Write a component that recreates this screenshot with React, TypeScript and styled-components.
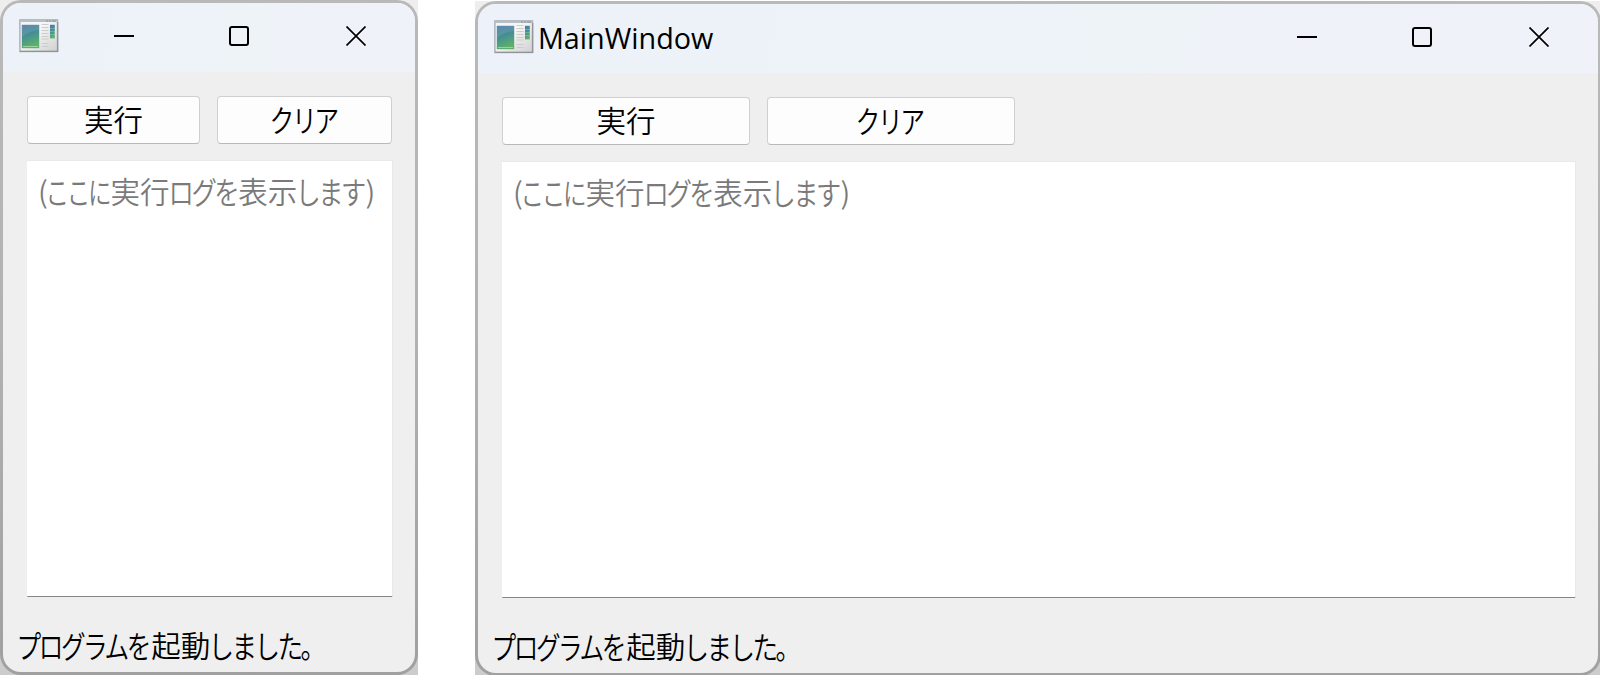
import React from "react";
import styled, { createGlobalStyle } from "styled-components";

const GlobalStyle = createGlobalStyle`
  * { box-sizing: border-box; }
  body {
    margin: 0;
    background: #fff;
    overflow: hidden;
  }
`;

const Desktop = styled.main`
  display: flex;
  gap: 57px;
  width: 1601px;
  height: 675px;
  overflow: hidden;
  font-family: "Noto Sans CJK JP", sans-serif;
  font-weight: 350;
  font-size: 29.5px;
  color: #000;
`;

const Backdrop = styled.div<{ $width: number; $top: number }>`
  flex: none;
  width: ${(p) => p.$width}px;
  height: 675px;
  margin-top: ${(p) => p.$top}px;
  background: linear-gradient(#eeeeee, #e6e6e6 50%, #cccccc);
`;

const Frame = styled.section`
  height: 100%;
  padding: 3px;
  border-radius: 21px;
  background: linear-gradient(#b9b9b9, #b2b2b2 50%, #a0a0a0);
`;

const Body = styled.div`
  display: flex;
  flex-direction: column;
  height: 100%;
  border-radius: 18px;
  overflow: hidden;
  background: #efefef;
`;

const TitleBar = styled.header`
  display: flex;
  flex: none;
  height: 69px;
  padding-left: 16px;
  background: linear-gradient(100deg, #edf2fa, #eef3f8 60%, #eff2f8);
`;

const AppIcon = styled.svg`
  flex: none;
  width: 40px;
  height: 34px;
  margin-top: 16px;
`;

const Title = styled.h1`
  margin: 0 0 0 4px;
  font: 400 29.5px/67px "Open Sans", "Noto Sans", sans-serif;
  white-space: nowrap;
`;

const TitleText = styled.span`
  display: inline-block;
  transform: scaleX(0.975);
  transform-origin: left;
`;

const Captions = styled.div`
  display: flex;
  margin-left: auto;
`;

const CaptionButton = styled.button<{ $width: number }>`
  display: flex;
  justify-content: center;
  width: ${(p) => p.$width}px;
  padding: 23px 0 0;
  border: 0;
  background: none;

  svg {
    width: 20px;
    height: 20px;
    fill: none;
    stroke: #000;
    stroke-width: 2;
  }
`;

const Content = styled.div`
  display: flex;
  flex: none;
  flex-direction: column;
  gap: 16px;
  padding: 24px 22px 0 24px;
`;

const ButtonRow = styled.div`
  display: flex;
  gap: 17px;
`;

const PushButton = styled.button<{ $width: number }>`
  width: ${(p) => p.$width}px;
  height: 48px;
  padding: 0 0 4px;
  border: 1px solid #d0d0d0;
  border-bottom-color: #b9b9b9;
  border-radius: 4px;
  background: #fdfdfd;
  color: #000;
  font: inherit;
  line-height: 42px;
  white-space: nowrap;
`;

const Log = styled.div`
  height: 437px;
  padding: 5px 0 0 11px;
  border: 1px solid #e9e9e9;
  border-width: 1px 1px 1px 0;
  border-bottom-color: #868686;
  border-radius: 1px;
  background: #fff;
  color: #7a7a7a;
  line-height: 48px;
  white-space: nowrap;
`;

const StatusBar = styled.footer`
  padding: 23px 0 0 15px;
  line-height: 48px;
  white-space: nowrap;
`;

const EM = 29.5;
const TIGHT = 0.9;

/* Kana are set narrower than kanji: each glyph is condensed to the given pitch. */
const Kana = styled.span<{ $count: number; $pitch: number }>`
  display: inline-block;
  width: ${(p) => p.$count * EM * TIGHT}px;
  margin-right: ${(p) => p.$count * (p.$pitch - EM * TIGHT)}px;
  letter-spacing: ${EM * (TIGHT - 1)}px;
  text-align: left;
  transform: translateX(-1.5px) scale(${(p) => p.$pitch / (EM * TIGHT)}, 1.05);
  transform-origin: left;
`;

const Paren = styled.span`
  display: inline-block;
  width: 9px;
`;

function WindowIcon({ id }: { id: string }) {
  return (
    <AppIcon viewBox="0 0 40 34">
      <defs>
        <linearGradient id={id} x1="0" y1="0" x2="0.3" y2="1">
          <stop offset="0" stopColor="#4a78ab" />
          <stop offset="0.5" stopColor="#458f93" />
          <stop offset="1" stopColor="#5cb06b" />
        </linearGradient>
        <linearGradient id={`${id}-bg`} x1="0" y1="0" x2="1" y2="1">
          <stop offset="0.4" stopColor="#f6f6f6" />
          <stop offset="1" stopColor="#d0d0d0" />
        </linearGradient>
      </defs>
      <rect x="0.9" y="0.9" width="37.6" height="31.6" fill={`url(#${id}-bg)`} stroke="#a9adb2" strokeWidth="1.4" />
      <path d="M1 1H38.5V3H1Z" fill="#b9bfc6" />
      <path d="M1 32.3H38.7V3" fill="none" stroke="#909498" strokeWidth="1.2" />
      <path d="M27 2h2m1 0h2m1 0h4" stroke="#8d9399" />
      <rect x="2.8" y="5.8" width="17.4" height="23.4" fill={`url(#${id})`} />
      <path d="M3 18Q9 12 20 11V6H3Z" fill="#fff" opacity="0.1" />
      <path d="M4 27.5H19" stroke="#a9d9a8" strokeWidth="0.8" />
      <path d="M22.5 5.5h7m-7 3h7m-7 3h7m-7 3h7m-7 3h7m-7 2.5h7m-7 4.5h7m-7 3h7" stroke="#cccccc" strokeWidth="1.2" />
      <rect x="31" y="5.8" width="4.8" height="13.6" fill={`url(#${id})`} />
      <path d="M31 9.5h5m-5 3h5m-5 3h5" stroke="#a9cbd0" strokeWidth="0.7" opacity="0.6" />
    </AppIcon>
  );
}

interface WindowProps {
  id: string;
  title?: string;
  width: number;
  top: number;
  buttons: [number, number];
}

function MainWindow({ id, title, width, top, buttons }: WindowProps) {
  return (
    <Backdrop $width={width} $top={top}>
      <Frame>
        <Body>
          <TitleBar>
            <WindowIcon id={id} />
            {title && <Title><TitleText>{title}</TitleText></Title>}
            <Captions>
              <CaptionButton $width={114} aria-label="Minimize">
                <svg viewBox="0 0 20 20"><path d="M0 10H20" /></svg>
              </CaptionButton>
              <CaptionButton $width={116} aria-label="Maximize">
                <svg viewBox="0 0 20 20"><rect x="1" y="1" width="18" height="18" rx="2" /></svg>
              </CaptionButton>
              <CaptionButton $width={118} aria-label="Close">
                <svg viewBox="0 0 20 20"><path d="M0.5 0.5L19.5 19.5M19.5 0.5L0.5 19.5" strokeWidth="1.7" /></svg>
              </CaptionButton>
            </Captions>
          </TitleBar>
          <Content>
            <ButtonRow>
              <PushButton $width={buttons[0]}>実行</PushButton>
              <PushButton $width={buttons[1]}><Kana $count={3} $pitch={22.4}>クリア</Kana></PushButton>
            </ButtonRow>
            <Log>
              <Paren>(</Paren>
              <Kana $count={3} $pitch={21.2}>ここに</Kana>
              実行
              <Kana $count={3} $pitch={22.9}>ログを</Kana>
              表示
              <Kana $count={3} $pitch={22.7}>します</Kana>
              <Paren>)</Paren>
            </Log>
          </Content>
          <StatusBar>
            <Kana $count={6} $pitch={22.2}>プログラムを</Kana>
            起動
            <Kana $count={5} $pitch={23}>しました。</Kana>
          </StatusBar>
        </Body>
      </Frame>
    </Backdrop>
  );
}

export default function App() {
  return (
    <>
      <GlobalStyle />
      <Desktop>
        <MainWindow id="small" width={418} top={0} buttons={[173, 175]} />
        <MainWindow id="large" title="MainWindow" width={1126} top={1} buttons={[248, 248]} />
      </Desktop>
    </>
  );
}
